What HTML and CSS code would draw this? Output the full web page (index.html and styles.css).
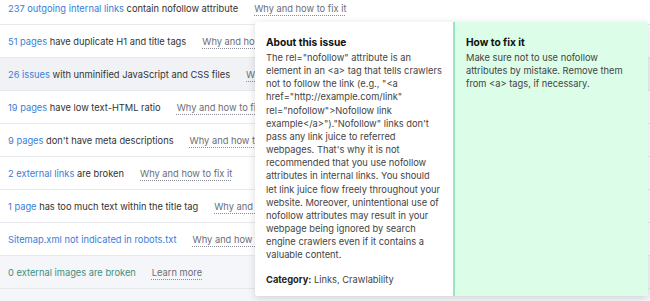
FILE: index.html
```html
<!DOCTYPE html>
<html lang="en">

<head>
    <meta charset="UTF-8">
    <title>Site Audit - Notices</title>
    <link rel="stylesheet" href="styles.css">
</head>

<body>
    <div class="issues">
        <div class="row">
            <span class="title"><a class="count">237 outgoing internal links</a> contain nofollow attribute</span>
            <a class="hint">Why and how to fix it</a>
        </div>
        <div class="row">
            <span class="title"><a class="count">51 pages</a> have duplicate H1 and title tags</span>
            <a class="hint">Why and how to fix it</a>
        </div>
        <div class="row active">
            <span class="title"><a class="count">26 issues</a> with unminified JavaScript and CSS files</span>
            <a class="hint">Why and how to fix it</a>
        </div>
        <div class="row">
            <span class="title"><a class="count">19 pages</a> have low text-HTML ratio</span>
            <a class="hint">Why and how to fix it</a>
        </div>
        <div class="row">
            <span class="title"><a class="count">9 pages</a> don't have meta descriptions</span>
            <a class="hint">Why and how to fix it</a>
        </div>
        <div class="row">
            <span class="title"><a class="count">2 external links</a> are broken</span>
            <a class="hint">Why and how to fix it</a>
        </div>
        <div class="row">
            <span class="title"><a class="count">1 page</a> has too much text within the title tag</span>
            <a class="hint">Why and how to fix it</a>
        </div>
        <div class="row">
            <span class="title"><a class="count">Sitemap.xml not indicated in robots.txt</a></span>
            <a class="hint">Why and how to fix it</a>
        </div>
        <div class="row passed">
            <span class="title ok">0 external images are broken</span>
            <a class="hint">Learn more</a>
        </div>
        <div class="row passed"></div>
    </div>

    <div class="popup">
        <div class="about">
            <h4>About this issue</h4>
            <p>The rel="nofollow" attribute is an element in an &lt;a&gt; tag that tells crawlers not to follow the link (e.g., "&lt;a href="http://example.com/link" rel="nofollow"&gt;Nofollow link example&lt;/a&gt;")."Nofollow" links don't pass any link juice to referred webpages. That's why it is not recommended that you use nofollow attributes in internal links. You should let link juice flow freely throughout your website. Moreover, unintentional use of nofollow attributes may result in your webpage being ignored by search engine crawlers even if it contains a valuable content.</p>
            <p class="category"><b>Category:</b> Links, Crawlability</p>
        </div>
        <div class="fix">
            <h4>How to fix it</h4>
            <p>Make sure not to use nofollow attributes by mistake. Remove them from &lt;a&gt; tags, if necessary.</p>
        </div>
    </div>
</body>

</html>
```

FILE: styles.css
```css
* {
    padding: 0;
    margin: 0;
    box-sizing: border-box;
}

body {
    height: 100vh;
    overflow: hidden;
    font-family: 'Inter', sans-serif;
    font-size: 9.3px;
    color: #333;
    background: #fff;
    position: relative;
}

.issues {
    margin-top: -8px;
}

.row {
    display: flex;
    align-items: center;
    gap: 16px;
    height: 33px;
    padding: 1px 8px 0;
    border-bottom: 1px solid #e8e9ed;
}

.row.active {
    background: #f1f2f5;
}

.row.passed {
    background: #f5f6f9;
}

.count {
    color: #3b7dd8;
}

.title.ok {
    color: #3f8f7f;
}

.hint {
    color: #6b6d78;
    text-decoration: underline dotted #8a8c96;
    text-underline-offset: 3px;
}

.popup {
    position: absolute;
    top: 22px;
    left: 255px;
    width: 393px;
    height: 274px;
    display: flex;
    background: white;
    border-radius: 3px;
    box-shadow: 0 2px 8px rgba(0, 0, 0, 0.15);
}

.popup h4 {
    font-size: 10.2px;
    font-weight: 700;
    color: #111;
    margin-bottom: 3px;
}

.popup p {
    line-height: 13.15px;
    color: #444;
}

.about {
    width: 198px;
    padding: 14px 10px 12px 11px;
}

.category {
    margin-top: 11px;
}

.category b {
    color: #222;
}

.fix {
    flex: 1;
    padding: 14px 11px;
    background: #dcfde8;
    border-left: 2px solid #96e6bf;
    border-radius: 0 3px 3px 0;
}
```
